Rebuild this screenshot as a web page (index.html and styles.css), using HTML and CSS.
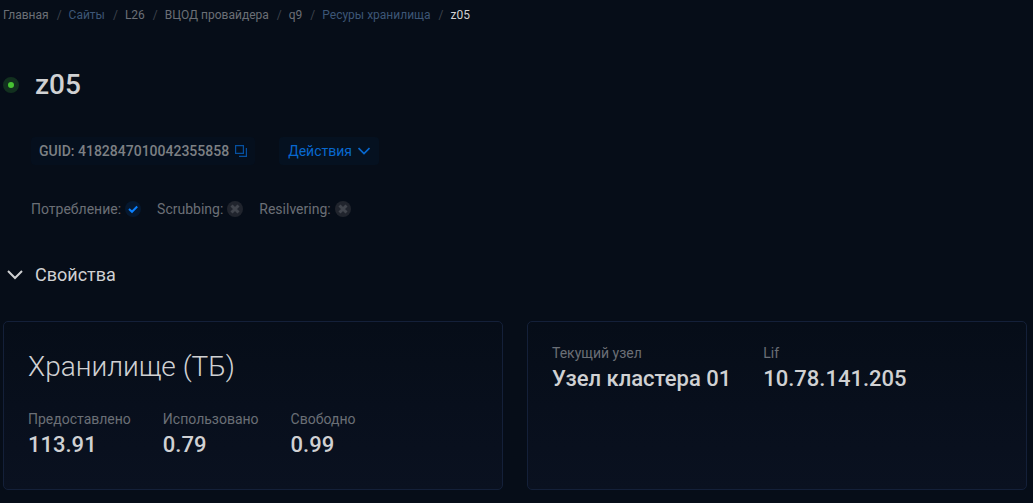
FILE: index.html
```html
<!DOCTYPE html>
<html lang="ru">
<head>
<meta charset="utf-8">
<meta name="viewport" content="width=device-width, initial-scale=1">
<title>z05</title>
<link rel="stylesheet" href="styles.css">
</head>
<body>

<nav class="breadcrumbs">
  <ol>
    <li>Главная</li>
    <li><a href="#">Сайты</a></li>
    <li>L26</li>
    <li>ВЦОД провайдера</li>
    <li>q9</li>
    <li><a href="#">Ресуры хранилища</a></li>
    <li class="current">z05</li>
  </ol>
</nav>

<main>
  <header class="title">
    <span class="status"></span>
    <h1>z05</h1>
  </header>

  <div class="toolbar">
    <div class="guid">
      <span>GUID: 4182847010042355858</span>
      <button class="copy" type="button" aria-label="Копировать">
        <svg width="12" height="12" viewBox="0 0 12 12" fill="none" stroke="currentColor" stroke-width="1.2"><path d="M0.600 0.600h7.800v7.800h-7.800zM11.400 3v8.400H4"/></svg>
      </button>
    </div>
    <button class="actions" type="button">
      Действия
      <svg width="12" height="8" viewBox="0 0 12 8" fill="none" stroke="currentColor" stroke-width="1.700"><path d="M0.500 1L6 6.500L11.500 1"/></svg>
    </button>
  </div>

  <div class="flags">
    <span class="flag">Потребление:
      <svg class="on" width="16" height="16" viewBox="0 0 16 16"><circle cx="8" cy="8" r="8"/><path d="M4 8L7 10.800L12.200 5.500"/></svg>
    </span>
    <span class="flag">Scrubbing:
      <svg class="off" width="16" height="16" viewBox="0 0 16 16"><circle cx="8" cy="8" r="8"/><path d="M4.500 4.500L11.500 11.500M11.500 4.500L4.500 11.500"/></svg>
    </span>
    <span class="flag">Resilvering:
      <svg class="off" width="16" height="16" viewBox="0 0 16 16"><circle cx="8" cy="8" r="8"/><path d="M4.500 4.500L11.500 11.500M11.500 4.500L4.500 11.500"/></svg>
    </span>
  </div>

  <h2>
    <button class="section-toggle" type="button" aria-expanded="true">
      <svg width="16" height="10" viewBox="0 0 16 10" fill="none" stroke="currentColor" stroke-width="2"><path d="M1 1L8 8L15 1"/></svg>
      Свойства
    </button>
  </h2>

  <div class="cards">
    <section class="card">
      <h3>Хранилище (ТБ)</h3>
      <dl>
        <div><dt>Предоставлено</dt><dd>113.91</dd></div>
        <div><dt>Использовано</dt><dd>0.79</dd></div>
        <div><dt>Свободно</dt><dd>0.99</dd></div>
      </dl>
    </section>
    <section class="card">
      <dl>
        <div><dt>Текущий узел</dt><dd>Узел кластера 01</dd></div>
        <div><dt>Lif</dt><dd>10.78.141.205</dd></div>
      </dl>
    </section>
  </div>
</main>

</body>
</html>
```
FILE: styles.css
```css
* {
  box-sizing: border-box;
}

body {
  margin: 0;
  padding: 5px 6px 13px 3px;
  background: #060d18;
  color: #d0d1d3;
  font-family: Roboto, sans-serif;
  font-size: 14px;
  line-height: 20px;
}

h1, h2, h3, dl, dd, ol {
  margin: 0;
  padding: 0;
}

button {
  padding: 0;
  border: 0;
  background: none;
  color: inherit;
  font: inherit;
  cursor: pointer;
}

svg {
  display: block;
  flex: none;
}

.breadcrumbs ol {
  display: flex;
  flex-wrap: wrap;
  list-style: none;
  color: #6b6f76;
  font-size: 12px;
}

.breadcrumbs li + li::before {
  content: "/";
  margin: 0 7px 0 8px;
  color: #3d424b;
}

.breadcrumbs a {
  color: #3d5676;
  text-decoration: none;
}

.breadcrumbs .current {
  color: #d0d1d3;
}

.title {
  display: flex;
  align-items: center;
  gap: 16px;
  margin-top: 39px;
}

.title h1 {
  font-size: 28px;
  font-weight: 500;
  line-height: 41px;
}

.status {
  width: 16px;
  height: 16px;
  border: 5px solid #12301f;
  border-radius: 50%;
  background: #47c333;
}

.toolbar {
  display: flex;
  flex-wrap: wrap;
  gap: 24px;
  margin: 32px 0 0 28px;
}

.guid,
.actions {
  display: flex;
  align-items: center;
  gap: 6px;
  height: 28px;
  border-radius: 4px;
}

.guid {
  padding: 0 8px;
  background: #050f1d;
  color: #7d8084;
  font-weight: 500;
}

.copy {
  color: #0650a0;
}

.actions {
  padding: 0 9px;
  background: #051120;
  color: #0868cf;
}

.flags {
  display: flex;
  flex-wrap: wrap;
  gap: 16px;
  margin: 34px 0 0 28px;
  color: #6b6f76;
}

.flag {
  display: flex;
  align-items: center;
  gap: 4px;
}

.flag path {
  fill: none;
  stroke-width: 2;
}

.on circle {
  fill: #06182f;
}

.on path {
  stroke: #0b80ff;
}

.off circle {
  fill: #20242d;
}

.off path {
  stroke: #41454d;
  stroke-width: 3;
}

h2 {
  margin-top: 44px;
  font-size: 18px;
  font-weight: 400;
  line-height: 24px;
}

.section-toggle {
  display: flex;
  align-items: center;
  gap: 12px;
  padding-left: 4px;
}

.cards {
  display: grid;
  grid-template-columns: repeat(auto-fit, minmax(360px, 1fr));
  gap: 24px;
  margin-top: 34px;
}

.card {
  padding: 23px 24px 28px;
  border: 1px solid #142039;
  border-radius: 5px;
  background: linear-gradient(#060d18, #0a1120);
}

.card h3 {
  margin-bottom: 22px;
  font-size: 28px;
  font-weight: 300;
  line-height: 44px;
}

.card dl {
  display: flex;
  flex-wrap: wrap;
  gap: 12px 32px;
}

.card dt {
  line-height: 16px;
  color: #6b6f76;
}

.card dd {
  margin-top: 2px;
  font-size: 22px;
  font-weight: 500;
  line-height: 32px;
}
```
